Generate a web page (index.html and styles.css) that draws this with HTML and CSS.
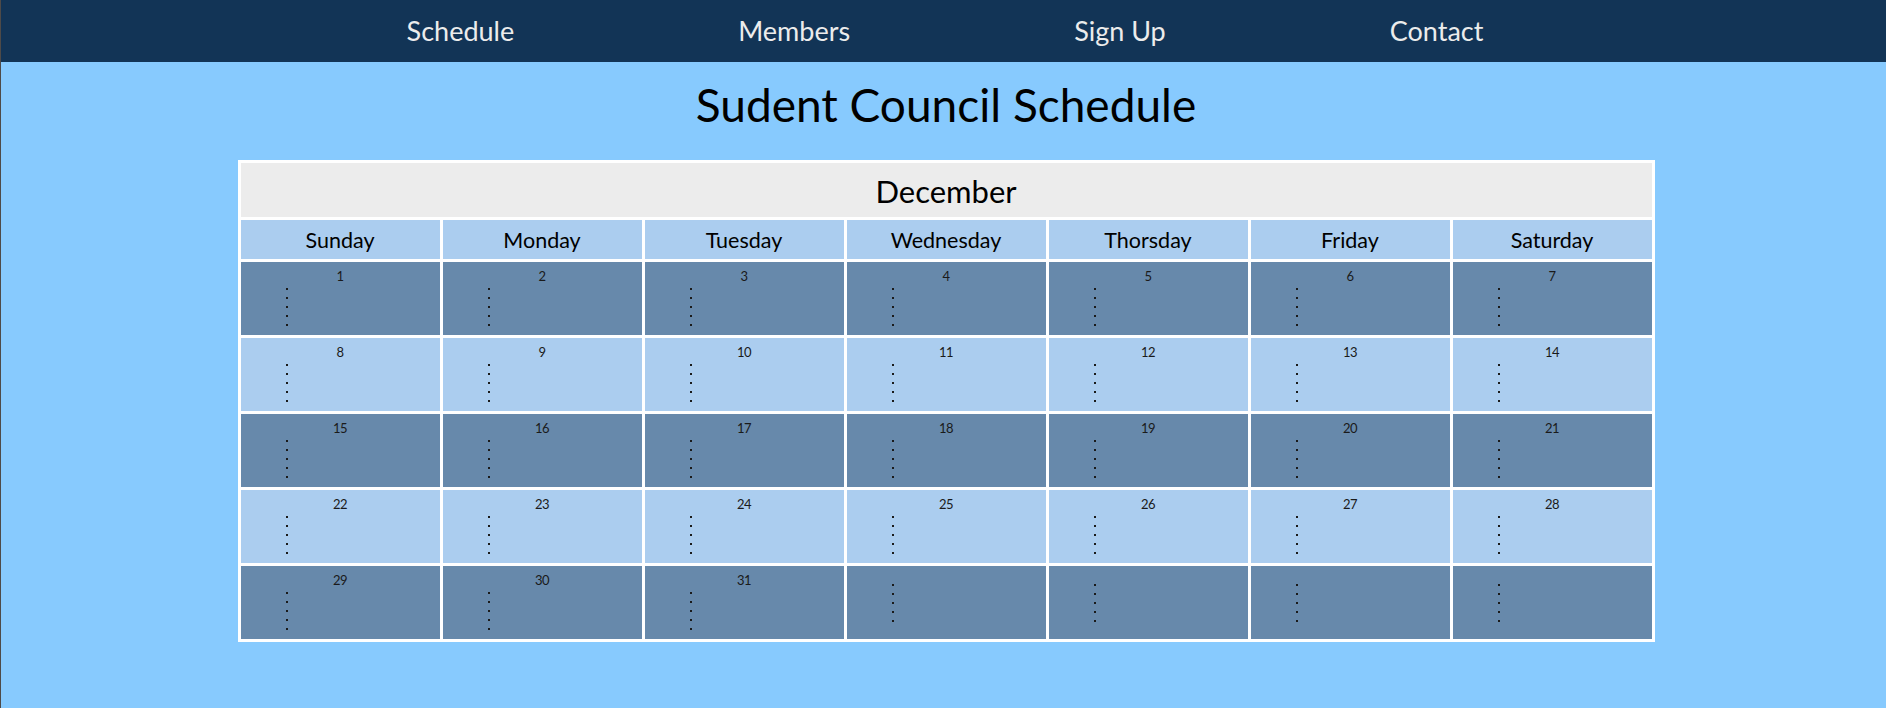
FILE: index.html
```html
<!DOCTYPE html>
<html lang="en">
<head>
<meta charset="utf-8">
<title>Student Council Schedule</title>
<link rel="stylesheet" href="styles.css">
</head>
<body>
<nav class="topnav">
  <ul class="nav-list">
    <li><a href="#">Schedule</a></li>
    <li><a href="#">Members</a></li>
    <li><a href="#">Sign Up</a></li>
    <li><a href="#">Contact</a></li>
  </ul>
</nav>
<main class="content">
  <h1 class="title">Sudent Council Schedule</h1>
  <table class="calendar">
    <thead>
      <tr><th class="month" colspan="7">December</th></tr>
      <tr class="weekdays">
        <th>Sunday</th><th>Monday</th><th>Tuesday</th><th>Wednesday</th><th>Thorsday</th><th>Friday</th><th>Saturday</th>
      </tr>
    </thead>
    <tbody id="weeks"></tbody>
  </table>
</main>
<script src="script.js"></script>
</body>
</html>
```

FILE: script.js
```js
(function () {
  var tbody = document.getElementById('weeks');
  var day = 1;
  for (var w = 0; w < 5; w++) {
    var tr = document.createElement('tr');
    tr.className = w % 2 === 0 ? 'week dark' : 'week light';
    for (var d = 0; d < 7; d++) {
      var td = document.createElement('td');
      td.className = 'day';
      if (day <= 31) {
        var n = document.createElement('div');
        n.className = 'num';
        n.textContent = day;
        td.appendChild(n);
      }
      var ul = document.createElement('ul');
      ul.className = 'slots';
      for (var i = 0; i < 5; i++) {
        ul.appendChild(document.createElement('li'));
      }
      td.appendChild(ul);
      tr.appendChild(td);
      day++;
    }
    tbody.appendChild(tr);
  }
})();
```

FILE: styles.css
```css
html {
  background: #87cafe;
}
body {
  margin: 0;
  min-height: 708px;
  border-left: 1px solid #4e4a48;
  background: #87cafe;
  font-family: Lato, "Open Sans", sans-serif;
  color: #000;
}
.topnav {
  background: #123456;
  height: 62px;
}
.nav-list {
  list-style: none;
  margin: 0;
  padding: 0 0 0 3px;
  display: flex;
  justify-content: center;
  gap: 224px;
}
.nav-list a {
  display: block;
  line-height: 62px;
  font-size: 27px;
  color: #ececec;
  text-decoration: none;
}
.content {
  padding-left: 5px;
}
.title {
  margin: 15px 0 28px;
  text-align: center;
  font-size: 46px;
  font-weight: 400;
  line-height: 55px;
}
.calendar {
  width: 1417px;
  margin: 0 auto;
  table-layout: fixed;
  border-collapse: separate;
  border-spacing: 3px;
  background: #fff;
}
.month {
  background: #ececec;
  font-size: 31px;
  font-weight: 400;
  line-height: 37px;
  padding: 10px 0 7px;
}
.weekdays th {
  background: #abcdef;
  font-size: 21.5px;
  font-weight: 400;
  line-height: 26px;
  padding: 7px 0 6px;
}
.day {
  height: 73px;
  padding: 0;
  vertical-align: middle;
}
.dark .day {
  background: #6789ab;
}
.light .day {
  background: #abcdef;
}
.num {
  text-align: center;
  font-size: 13px;
  line-height: 16px;
  letter-spacing: -0.5px;
  color: #1a1a1a;
}
.slots {
  list-style: none;
  margin: 0;
  padding: 0 0 0 45px;
}
.slots li {
  height: 9px;
  display: flex;
  align-items: center;
}
.slots li::before {
  content: "";
  width: 2px;
  height: 2px;
  background: #1a1a1a;
}
```
